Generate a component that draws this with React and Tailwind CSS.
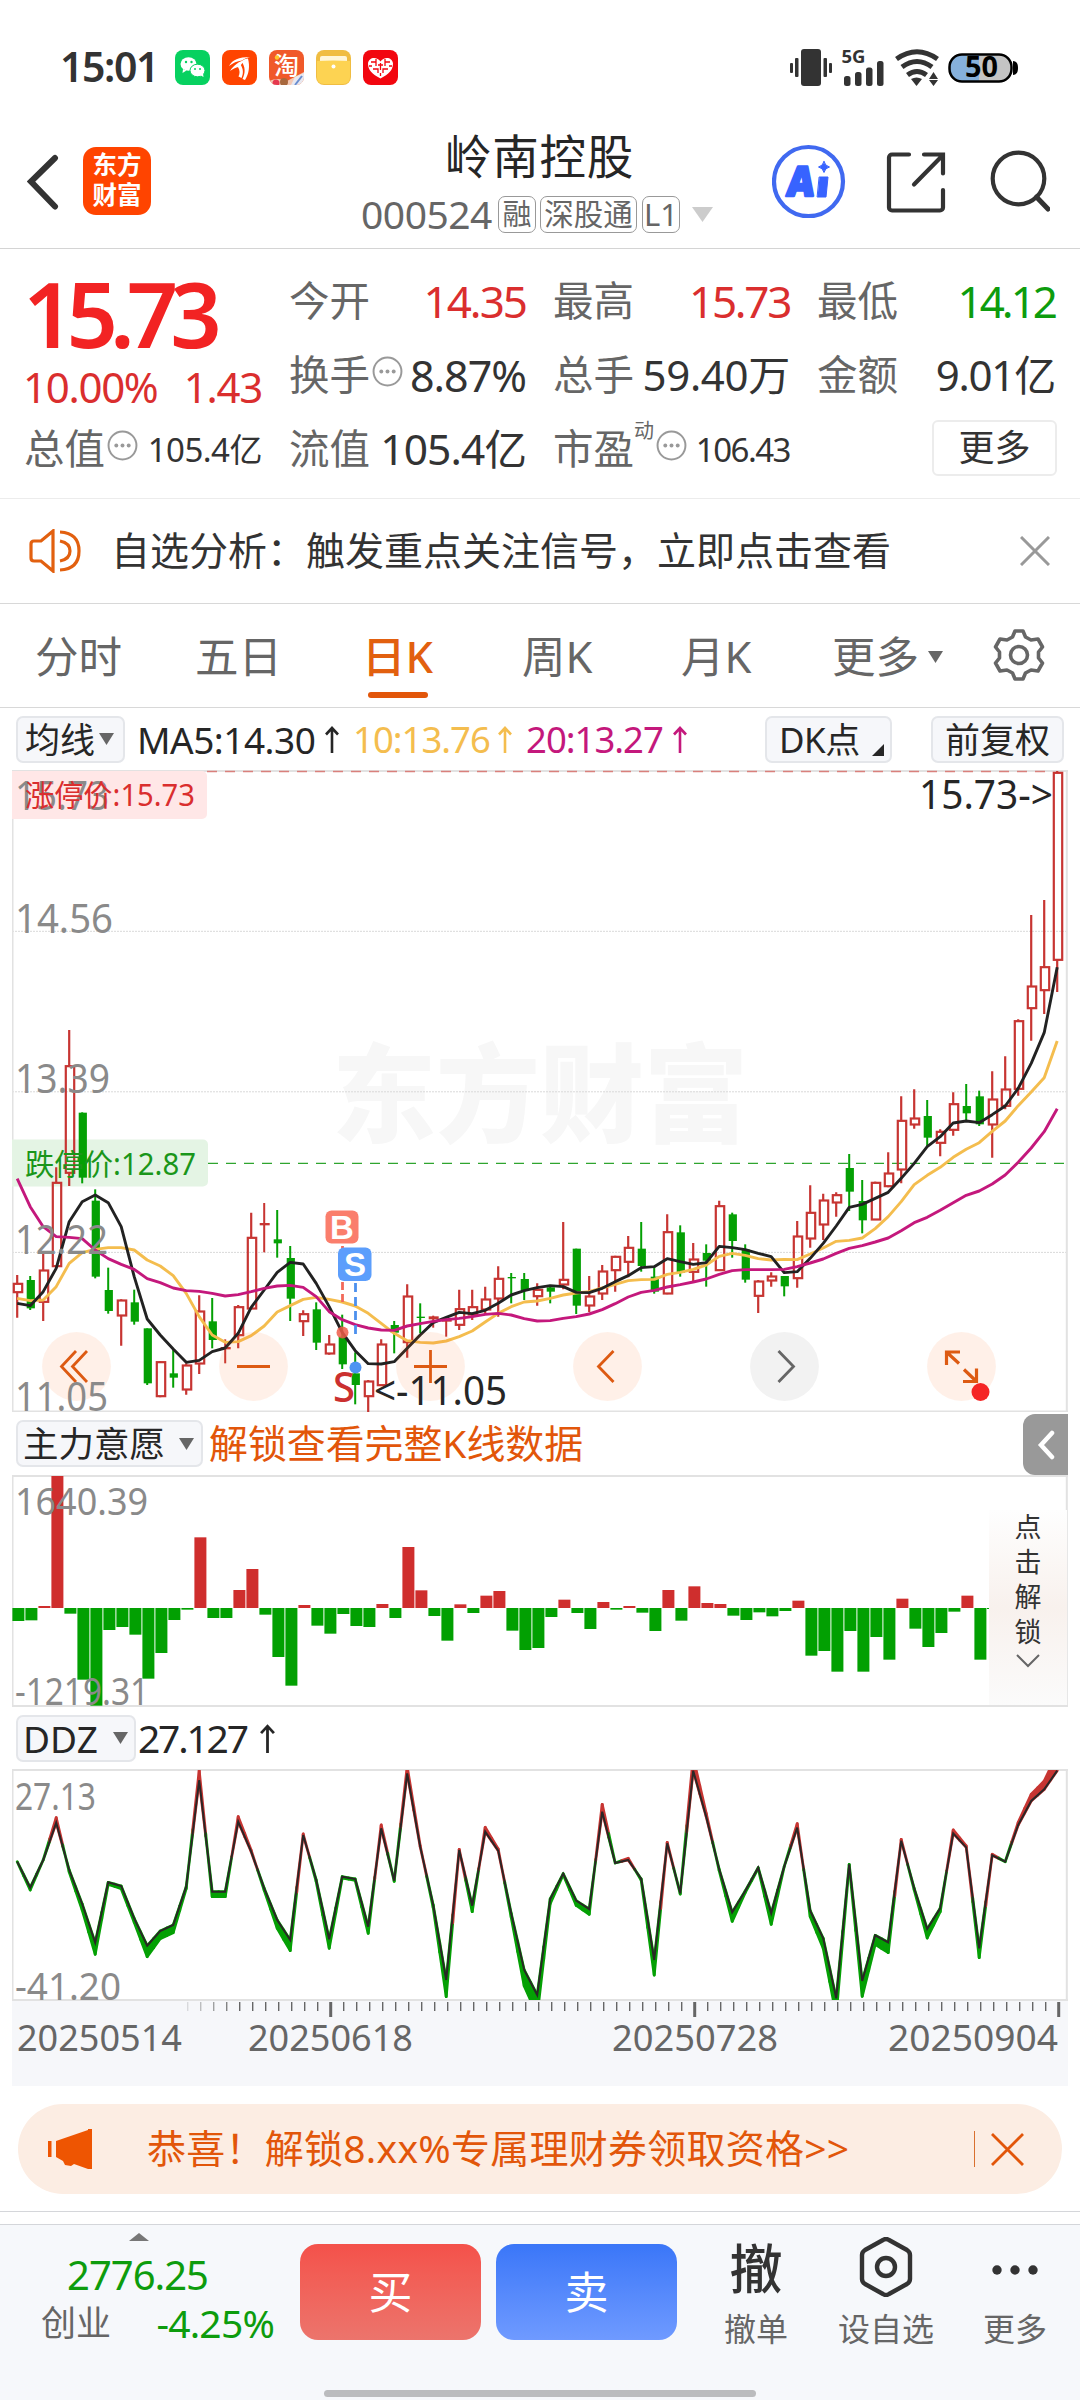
import React from 'react'

const RED = '#c73532'
const GREEN = '#04a004'
const STEP = 13
const FIRST_X = 17.2

const xAt = (i) => FIRST_X + STEP * i
const yAt = (v) => 1020 + v / 3

// [up, high, body top, body bottom, low]
const candles = [
  [1, 765, 790, 818, 893], [0, 768, 780, 865, 870], [1, 702, 750, 847, 903], [1, 442, 487, 740, 742],
  [1, 30, 137, 460, 498], [0, 277, 278, 473, 490], [0, 508, 542, 770, 775], [0, 743, 810, 873, 881],
  [1, 838, 840, 888, 977], [0, 809, 847, 905, 914], [0, 925, 925, 1090, 1095], [1, 1023, 1025, 1130, 1132],
  [0, 990, 1060, 1073, 1103], [1, 1030, 1035, 1110, 1124], [1, 826, 873, 1032, 1062], [0, 834, 904, 960, 985],
  [1, 958, 981, 988, 1030], [1, 855, 860, 947, 985], [1, 578, 652, 867, 868], [1, 549, 609, 616, 697],
  [0, 570, 658, 670, 713], [0, 678, 714, 836, 903], [1, 871, 881, 905, 948], [0, 847, 868, 968, 990],
  [1, 945, 972, 1002, 1004], [0, 884, 950, 1033, 1047], [0, 997, 1060, 1095, 1153], [1, 1080, 1083, 1130, 1178],
  [1, 958, 972, 1097, 1098], [0, 903, 915, 938, 1000], [1, 793, 828, 968, 1013], [0, 850, 890, 894, 940],
  [1, 887, 889, 898, 923], [1, 895, 897, 905, 950], [1, 809, 866, 916, 930], [1, 809, 860, 885, 900],
  [1, 800, 837, 870, 882], [1, 739, 775, 837, 890], [0, 759, 771, 775, 850], [0, 759, 777, 810, 840],
  [1, 790, 808, 830, 857], [0, 795, 802, 815, 850], [1, 606, 778, 795, 808], [0, 686, 686, 857, 882],
  [1, 768, 828, 858, 877], [1, 735, 753, 822, 840], [1, 707, 709, 752, 815], [1, 648, 682, 727, 772],
  [0, 606, 686, 738, 755], [0, 742, 770, 815, 821], [1, 583, 635, 822, 823], [0, 616, 637, 758, 770],
  [1, 669, 717, 757, 783], [0, 673, 699, 722, 800], [1, 542, 557, 752, 753], [0, 578, 583, 663, 713],
  [0, 673, 689, 779, 788], [1, 780, 783, 829, 879], [1, 757, 768, 783, 800], [0, 768, 768, 799, 829],
  [1, 603, 648, 776, 803], [1, 496, 577, 657, 683], [1, 521, 540, 615, 660], [1, 517, 524, 549, 590],
  [0, 402, 444, 515, 573], [0, 480, 543, 601, 640], [1, 485, 487, 600, 600], [1, 397, 459, 500, 502],
  [1, 229, 301, 450, 490], [1, 208, 294, 315, 326], [0, 240, 288, 353, 380], [1, 328, 334, 370, 409],
  [1, 217, 251, 331, 347], [0, 192, 258, 280, 302], [0, 212, 229, 313, 318], [1, 154, 237, 315, 413],
  [1, 109, 207, 259, 268], [1, -2, 2, 208, 227], [1, -315, -102, -34, 62], [1, -360, -160, -88, -18],
  [1, -747, -743, -179, -84],
]

const ma5 = [850, 857, 815, 745, 605, 545, 525, 548, 620, 770, 897, 945, 987, 1027, 1021, 995, 984, 940, 862, 810, 757, 727, 732, 790, 860, 937, 992, 1031, 1032, 1025, 985, 945, 908, 892, 877, 881, 871, 850, 825, 812, 803, 797, 800, 817, 818, 805, 785, 767, 743, 740, 716, 725, 733, 728, 679, 683, 689, 700, 710, 758, 755, 715, 670, 618, 562, 553, 535, 517, 475, 430, 380, 350, 309, 303, 308, 284, 258, 205, 130, 38, -158]
const ma10 = [835, 842, 840, 800, 730, 698, 688, 683, 683, 690, 720, 738, 767, 820, 890, 945, 967, 965, 947, 918, 876, 857, 838, 832, 838, 846, 858, 880, 910, 940, 962, 967, 969, 963, 950, 933, 906, 880, 860, 846, 843, 835, 825, 819, 815, 804, 793, 782, 779, 778, 763, 757, 748, 735, 709, 700, 706, 716, 720, 718, 719, 702, 684, 664, 661, 654, 626, 590, 545, 494, 466, 442, 412, 388, 368, 334, 303, 257, 216, 173, 63]
const ma20 = [476, 560, 620, 650, 652, 656, 690, 716, 733, 748, 776, 788, 804, 812, 814, 820, 828, 824, 815, 805, 798, 796, 802, 830, 875, 899, 914, 924, 930, 931, 918, 911, 904, 899, 895, 890, 883, 880, 885, 896, 903, 902, 895, 890, 882, 869, 851, 831, 817, 811, 801, 794, 786, 777, 763, 752, 749, 749, 749, 748, 740, 729, 717, 700, 685, 677, 666, 654, 632, 608, 592, 571, 548, 526, 513, 492, 465, 427, 384, 335, 266]

const flow = [-39, -37, 6, 396, -17, -215, -293, -66, -57, -80, -212, -135, -36, -5, 212, -30, -30, 54, 117, -20, -147, -233, 9, -53, -77, -18, -54, -57, 12, -30, 183, 53, -24, -98, 11, -15, 37, 51, -68, -126, -120, -27, 25, -15, -63, 18, -5, 6, -14, -69, 54, -38, 65, 15, 12, -23, -36, -13, -25, -9, 22, -143, -129, -191, -69, -191, -87, -155, 28, -62, -117, -75, -11, 37, -155]

// DDZ line and the distance to its signal line
const ddz = [485, 563, 480, 368, 510, 612, 728, 547, 558, 655, 737, 693, 675, 560, 240, 575, 575, 365, 455, 565, 660, 720, 405, 540, 718, 530, 537, 680, 385, 542, 220, 440, 615, 840, 450, 617, 395, 452, 640, 810, 885, 597, 521, 602, 627, 335, 489, 480, 537, 780, 430, 580, 212, 350, 508, 637, 573, 503, 640, 500, 383, 632, 715, 895, 493, 843, 706, 727, 422, 565, 687, 625, 400, 442, 745, 466, 485, 375, 303, 268, 212]
const ddzGap = [0, 7, 0, -15, 6, 18, 35, 6, 8, 12, 33, 23, 23, 6, -28, 15, 15, -15, -4, 6, 25, 32, -3, 5, 27, 4, 4, 20, -10, 2, -20, -3, 8, 50, -2, 18, -13, -5, 12, 48, 60, 14, 3, 14, 16, -22, 0, -5, 4, 45, -3, 2, -40, -10, 4, 27, 5, 2, 33, 0, -12, 18, 30, 50, 2, 46, 27, 31, -4, 5, 27, 10, -10, -4, 28, -3, 0, -8, -20, -25, -50]

const line = (arr) => arr.map((v, i) => `${xAt(i)},${yAt(v)}`).join(' ')

function Label({ x, y, w, size = 40, fill = '#8a8a8a', weight = 400, children }) {
  return (
    <text x={x} y={y} fontSize={size} fill={fill} fontWeight={weight} textLength={w} lengthAdjust="spacingAndGlyphs">
      {children}
    </text>
  )
}

function Triangle({ className }) {
  return (
    <svg viewBox="0 0 15 12" preserveAspectRatio="none" className={className}>
      <path d="M0 0h15L7.500 12z" fill="currentColor" />
    </svg>
  )
}

function ArrowUp({ className }) {
  return (
    <svg viewBox="0 0 14 27" className={className} fill="none" stroke="currentColor" strokeWidth="2.6">
      <path d="M7 27V2M1 8.500l6-6.500 6 6.500" />
    </svg>
  )
}

function InfoDots() {
  return (
    <svg viewBox="0 0 30 30" className="w-[31px] h-[31px] shrink-0 -mt-[7px]">
      <circle cx="15" cy="15" r="13.500" fill="none" stroke="#999" strokeWidth="1.900" />
      <circle cx="9" cy="15" r="1.900" fill="#999" />
      <circle cx="15" cy="15" r="1.900" fill="#999" />
      <circle cx="21" cy="15" r="1.900" fill="#999" />
    </svg>
  )
}

function StatusBar() {
  return (
    <div className="h-[120px] pt-[14px] pl-[60px] pr-[61px] flex items-center justify-between">
      <div className="flex items-center">
        <span className="w-[115px] -mt-[2px] text-[41px] leading-[56px] font-semibold text-[#333] tracking-[-1.4px]">15:01</span>
        <div className="flex gap-[12px]">
          <svg viewBox="0 0 35 35" className="w-[35px] h-[35px]">
            <rect width="35" height="35" rx="8" fill="#07d160" />
            <ellipse cx="13.500" cy="14" rx="8" ry="6.800" fill="#fff" />
            <path d="M8 19l-.5 4 4-2.500z" fill="#fff" />
            <ellipse cx="22.500" cy="20.500" rx="7.500" ry="6.300" fill="#fff" stroke="#07d160" strokeWidth="1" />
            <path d="M25 25l3.500 2-.5-3.500z" fill="#fff" />
            <circle cx="11" cy="12" r="1.200" fill="#07d160" />
            <circle cx="16.500" cy="12" r="1.200" fill="#07d160" />
            <circle cx="20" cy="19" r="1" fill="#07d160" />
            <circle cx="25" cy="19" r="1" fill="#07d160" />
          </svg>
          <svg viewBox="0 0 35 35" className="w-[35px] h-[35px]">
            <rect width="35" height="35" rx="8" fill="#ff4400" />
            <path d="M7 16C10 10 17 7 28 7c-4 1-6 2-8 3.500-5 .5-9 2.500-13 5.500z" fill="#fff" />
            <path d="M8 21c4-6 9-10 16-11-3 2-5 4-6 7-4 0-7 2-10 4z" fill="#fff" />
            <path d="M19.500 11.500c2-2 4-3 6.500-3 2 8 1 15-3 21.500l-2.500-1c3-6 3-12-1-17.500z" fill="#fff" />
            <path d="M16 17l2.500-2.500c3 4.500 3 9 1 13.500l-3-1.500c1.500-3 1.500-6-.5-9.500z" fill="#fff" />
          </svg>
          <svg viewBox="0 0 35 35" className="w-[35px] h-[35px]">
            <defs>
              <clipPath id="tao"><rect width="35" height="35" rx="8" /></clipPath>
            </defs>
            <g clipPath="url(#tao)">
              <rect width="35" height="35" fill="#f0592a" />
              <path d="M0 31q9-4 18 0l17-9v13H0z" fill="#f4c9b4" />
              <circle cx="7" cy="33" r="3.500" fill="#e5384f" />
              <circle cx="15" cy="32" r="4" fill="#a8683d" />
              <path d="M22 35l4-8 9-4v12z" fill="#e8e8f0" />
              <path d="M26 35l7-9" stroke="#6a8ed0" strokeWidth="2" />
              <text x="5" y="24.500" fontSize="25" fontWeight="500" fill="#fff">淘</text>
              <circle cx="8" cy="7.500" r="2.200" fill="#ffc629" />
            </g>
          </svg>
          <svg viewBox="0 0 35 35" className="w-[35px] h-[35px]">
            <rect width="35" height="35" rx="8" fill="#f0bd42" />
            <rect x="4" y="6" width="27" height="9" rx="2" fill="#fff6d8" />
            <path d="M1 11q16-1 33 0v16q0 7-7 7H8q-7 0-7-7z" fill="#fdd352" />
            <circle cx="17.500" cy="16.500" r="2" fill="#fff" />
          </svg>
          <svg viewBox="0 0 35 35" className="w-[35px] h-[35px]">
            <rect width="35" height="35" rx="8" fill="#f2060f" />
            <path d="M17.500 28.500C9 24 5 20 5 13.500 5.500 7 14 6 17.500 11.500 21 6 29.500 7 30 13.500c0 6.500-4 10.500-12.500 15z" fill="#fff" />
            <path d="M8 12h5v4M10 19h5v4M27 12h-5v4M25 19h-5v4M15 15h5M17.500 13v7M6 16h3M29 16h-3M13 9v3M22 9v3M17.500 23v3" stroke="#f2060f" strokeWidth="1.300" fill="none" />
          </svg>
        </div>
      </div>

      <svg viewBox="0 0 229 38" className="w-[229px] h-[38px] overflow-visible" fill="#333">
        <rect x="0" y="15" width="3" height="10" rx="1" />
        <rect x="5" y="10" width="3.500" height="19" rx="1" />
        <rect x="11" y="1" width="20" height="37" rx="3" />
        <rect x="33.500" y="10" width="3.500" height="19" rx="1" />
        <rect x="39" y="15" width="3" height="10" rx="1" />
        <text x="51.500" y="15" fontSize="18.500" fontWeight="700" textLength="24" lengthAdjust="spacingAndGlyphs">5G</text>
        <rect x="54" y="28" width="6.500" height="10" rx="2.500" />
        <rect x="65" y="24" width="6.500" height="14" rx="2.500" />
        <rect x="76" y="19.500" width="6.500" height="18.500" rx="2.500" />
        <rect x="87" y="13" width="6.500" height="25" rx="2.500" />
        <g fill="none" stroke="#333" strokeWidth="5" transform="translate(105 0)">
          <path d="M1.500 11Q22-3.500 42.500 11" />
          <path d="M7 19Q22 8 37 19" />
          <path d="M12.500 27Q22 20 31.500 27" />
        </g>
        <path d="M121 31q5.500-3 11 0l-5.500 7z" />
        <path d="M143.500 24l4.500 7h-9zM143.500 38l4.500-6h-9z" />
        <rect x="159.500" y="6.500" width="62" height="27" rx="12.500" fill="#c4c4c4" />
        <path d="M189 6.500h-17a12.500 13.500 0 0 0 0 27h17z" fill="#86b1dc" />
        <rect x="159.500" y="6.500" width="62" height="27" rx="12.500" fill="none" stroke="#000" strokeWidth="2.500" />
        <path d="M223 13q5 0 5 7t-5 7z" fill="#000" />
        <text x="175" y="29" fontSize="28" fontWeight="700" fill="#000" textLength="33" lengthAdjust="spacingAndGlyphs">50</text>
      </svg>
    </div>
  )
}

function Header() {
  return (
    <div className="h-[129px] border-b border-[#d4d4d4] flex items-start pl-[27px] pr-[30px]">
      <div className="flex items-center pt-[27px] w-[290px]">
        <svg viewBox="0 0 33 60" className="w-[33px] h-[60px]" fill="none" stroke="#333" strokeWidth="6" strokeLinecap="round">
          <path d="M28 7L4 30.500l24 25" />
        </svg>
        <div className="ml-[23px] w-[68px] h-[68px] rounded-[13px] bg-[#ff4400] text-white font-bold text-[24.500px] leading-[30px] text-center pt-[3px]">
          东方
          <br />
          财富
        </div>
      </div>

      <div className="ml-[44px] w-[352px] flex flex-col items-center">
        <h1 className="mt-[10px] ml-[5px] text-[46.500px] leading-[52px] text-[#262626] tracking-[0.8px]">岭南控股</h1>
        <div className="mt-[14px] flex items-center h-[37px] text-[#666] whitespace-nowrap">
          <span className="text-[39px] leading-[53px] -mt-[2px] tracking-[-0.5px]">000524</span>
          <span className="ml-[6px] w-[38px] h-[37px] rounded-[7px] border border-[#999] text-[29px] leading-[34px] text-center">融</span>
          <span className="ml-[4px] w-[97px] h-[37px] rounded-[7px] border border-[#999] text-[29.500px] leading-[34px] text-center">深股通</span>
          <span className="ml-[5px] w-[38px] h-[37px] rounded-[7px] border border-[#999] text-[31px] leading-[34px] text-center">L1</span>
          <Triangle className="ml-[12px] w-[21px] h-[15px] text-[#ccc]" />
        </div>
      </div>

      <svg viewBox="0 0 278 76" className="ml-auto mt-[24px] w-[278px] h-[76px]" fill="none" stroke="#333" strokeWidth="4.200" strokeLinecap="round">
        <circle cx="36.500" cy="37.500" r="34.500" stroke="#4069f0" />
        <g fill="#3763ff" stroke="#3763ff" strokeWidth="1" strokeLinejoin="round">
          <text x="0" y="0" transform="translate(14 51.500) skewX(-6)" fontSize="41" fontWeight="900" textLength="27" lengthAdjust="spacingAndGlyphs" strokeWidth="2.500">A</text>
          <path d="M47.500 33h8.500l-2 20h-8.500z" />
          <path d="M52 17.500q1 4.500 5.500 5.500-4.500 1-5.500 5.500-1-4.500-5.500-5.500 4.500-1 5.500-5.500z" />
        </g>
        <path d="M137 10.500h-17a3 3 0 0 0-3 3v50a3 3 0 0 0 3 3h48a3 3 0 0 0 3-3V46M152 10.500h19v19M170 12l-28 28.500" />
        <circle cx="246.500" cy="34.500" r="25.800" />
        <path d="M264.500 53l11.500 12" strokeWidth="5" />
      </svg>
    </div>
  )
}

function Cell({ label, info, sup, value, className }) {
  return (
    <div className="h-[74px] flex items-center justify-between whitespace-nowrap">
      <span className="flex items-center text-[40.500px] leading-none text-[#666]">
        {label}
        {sup && <span className="text-[20px] -mt-[36px]">{sup}</span>}
        {info && <span className="ml-[2px]"><InfoDots /></span>}
      </span>
      <span className={className}>{value}</span>
    </div>
  )
}

function Quote() {
  return (
    <div className="h-[250px] pt-[15px] pl-[26px] border-b border-[#ececec] grid grid-cols-[236px_237px_237px_238px] gap-x-[27px] content-start">
      <div className="row-span-2 text-[#da2e2e] -ml-[3px]">
        <div className="h-[98px] flex items-center text-[90px] leading-[98px] font-semibold text-[#f22323] tracking-[-8px]">15.73</div>
        <div className="h-[50px] flex items-center justify-between text-[42px] leading-[50px] tracking-[-1.300px]">
          <span>10.00%</span>
          <span>1.43</span>
        </div>
      </div>
      <Cell label="今开" value="14.35" className="text-[44px] leading-none tracking-[-2px] text-[#da2e2e]" />
      <Cell label="最高" value="15.73" className="text-[44px] leading-none tracking-[-2.300px] text-[#da2e2e]" />
      <Cell label="最低" value="14.12" className="text-[44px] leading-none tracking-[-3px] text-[#0d9c0d]" />
      <Cell label="换手" info value="8.87%" className="text-[43px] leading-none tracking-[-1px] text-[#333]" />
      <Cell label="总手" value="59.40万" className="text-[42px] leading-none tracking-[-0.300px] text-[#333]" />
      <Cell label="金额" value="9.01亿" className="text-[42px] leading-none tracking-[-1.200px] text-[#333]" />
      <div className="-ml-[2px]">
        <Cell label="总值" info value="105.4亿" className="text-[33px] leading-none tracking-[-0.500px] text-[#333]" />
      </div>
      <Cell label="流值" value="105.4亿" className="text-[42.500px] leading-none tracking-[-0.900px] text-[#333]" />
      <Cell label="市盈" sup="动" info value="106.43" className="text-[33px] leading-none tracking-[-1.500px] text-[#333]" />
      <div className="flex items-center justify-end">
        <button className="w-[125px] h-[56px] -mt-[2px] -mr-[2px] rounded-[6px] border-2 border-[#ececec] text-[36px] leading-none text-[#333]">更多</button>
      </div>
    </div>
  )
}

function Notice() {
  return (
    <div className="h-[105px] border-b border-[#d8d8d8] flex items-center pl-[29px] pr-[30px]">
      <svg viewBox="0 0 52 44" className="w-[52px] h-[44px]" fill="none" stroke="#e2600f" strokeWidth="3.200">
        <path d="M24 2v40L12 32H5q-3 0-3-3V15q0-3 3-3h7zM31 3q19 1 19 19T31 41M31 12q10 2 10 10t-10 10" />
      </svg>
      <p className="ml-[30px] -mt-[3px] text-[39px] leading-[54px] text-[#333]">自选分析：触发重点关注信号，立即点击查看</p>
      <svg viewBox="0 0 30 30" className="ml-auto w-[30px] h-[30px]" stroke="#999" strokeWidth="3">
        <path d="M1 1l28 28M29 1L1 29" />
      </svg>
    </div>
  )
}

function Tabs() {
  return (
    <div className="h-[104px] pt-[2px] border-b border-[#d8d8d8] flex items-center pl-[35px] text-[43.500px] leading-none text-[#666] whitespace-nowrap">
      <span className="w-[160px]">分时</span>
      <span className="w-[167px]">五日</span>
      <span className="w-[160px] relative text-[#e2600f] font-medium">
        日K
        <i className="absolute left-[6px] -bottom-[20px] w-[60px] h-[6px] rounded-full bg-[#e2560a]" />
      </span>
      <span className="w-[159px]">周K</span>
      <span className="w-[151px]">月K</span>
      <span className="flex items-center">
        更多
        <Triangle className="ml-[9px] w-[15px] h-[12px]" />
      </span>
      <svg viewBox="0 0 52 52" className="ml-[50px] -mt-[4px] w-[52px] h-[52px]" fill="none" stroke="#666" strokeWidth="3.600" strokeLinejoin="round">
        <path d="M22 2h8l2.500 6 5.500 3 7-1 4.500 8-4 5v6l4 5-4.500 8-7-1-5.500 3-2.500 6h-8l-2.500-6-5.500-3-7 1-4.500-8 4-5v-6l-4-5L7 10l7 1 5.500-3z" />
        <circle cx="26" cy="26" r="8.500" />
      </svg>
    </div>
  )
}

const chip = 'h-[47px] shrink-0 rounded-[7px] border-2 border-[#e4e6ea] bg-[#f6f7fa] flex items-center leading-none text-[#262626]'

function CandleChart() {
  return (
    <svg viewBox="12 770 1056 642" className="w-[1056px] h-[642px] block">
      <g fontFamily="'Noto Sans CJK SC'" fontWeight="900" fontSize="107" fill="#f7f7f7">
        <text x="332" y="1134" textLength="416" lengthAdjust="spacingAndGlyphs">东方财富</text>
      </g>
      {[931.3, 1091.8, 1252.4].map((y) => (
        <line key={y} x1="12" x2="1068" y1={y} y2={y} stroke="#d9d9d9" strokeWidth="1" strokeDasharray="2 1" />
      ))}
      <path d="M12.500 1412V771M12 771h1056M1066.800 771v640M12 1411.500h1056" stroke="#e2e2e2" strokeWidth="2" fill="none" />
      <path d="M207 771.500h846" stroke="#d9807c" strokeWidth="1.300" strokeDasharray="10 8" />
      <path d="M208 1163.400h858" stroke="#2fa52f" strokeWidth="1.400" strokeDasharray="10 8" />
      <path d="M12 771h190a5 5 0 0 1 5 5v38a5 5 0 0 1-5 5H12z" fill="#ffe7e7" />
      <path d="M12 1139.500h191a5 5 0 0 1 5 5v37a5 5 0 0 1-5 5H12z" fill="#e4f4e4" />

      {candles.map(([up, high, top, bottom, low], i) => {
        const x = xAt(i)
        const h = (bottom - top) / 3
        const color = up ? RED : GREEN
        if (!up || h < 4) {
          return (
            <g key={i} fill={color}>
              <rect x={x - 1} y={yAt(high)} width="2" height={(low - high) / 3} />
              <rect x={x - 3.5 - (up ? 1 : 0)} y={yAt(top)} width={up ? 10 : 8.2} height={h} />
            </g>
          )
        }
        return (
          <g key={i} fill="none" stroke={color} strokeWidth="2.200">
            <path d={`M${x} ${yAt(high)}V${yAt(top)}M${x} ${yAt(bottom)}V${yAt(low)}`} />
            <rect x={x - 3.4} y={yAt(top) + 0.5} width="8.400" height={h - 1} />
          </g>
        )
      })}

      <g fill="none" strokeWidth="2.900" strokeLinejoin="round">
        <polyline points={line(ma10)} stroke="#f4bd4e" />
        <polyline points={line(ma5)} stroke="#222" />
        <polyline points={line(ma20)} stroke="#c4187c" />
      </g>

      <path d="M342.500 1246v57" stroke="#f26a5a" strokeWidth="2.800" strokeDasharray="8 4" />
      <path d="M355.500 1283v56" stroke="#4c90ee" strokeWidth="2.800" strokeDasharray="9 5" />
      <circle cx="342.500" cy="1332.500" r="6" fill="#ee5a48" fillOpacity=".85" />
      <circle cx="355.500" cy="1367.500" r="6" fill="#4d94f2" />
      <rect x="325.500" y="1210.500" width="33" height="33" rx="6" fill="#fa7e6c" />
      <rect x="338" y="1247.500" width="33.500" height="33.500" rx="6" fill="#5c9efc" />
      <g fontFamily="'Liberation Sans'" fontWeight="700" fill="#fff" textAnchor="middle">
        <text x="342" y="1238.500" fontSize="33">B</text>
        <text x="355" y="1276" fontSize="33">S</text>
      </g>
      <text x="333" y="1401.500" fontSize="41" fontWeight="500" fill="#cb302f" textLength="22" lengthAdjust="spacingAndGlyphs">S</text>

      {[76.5, 253.5, 430.5, 607.5, 784.5, 961.5].map((cx) => (
        <circle key={cx} cx={cx} cy="1366.500" r="34.400" fill={cx === 784.5 ? '#f2f2f2' : '#ff7430'} fillOpacity={cx === 784.5 ? 1 : 0.11} />
      ))}
      <g fill="none" stroke="#dd5a12" strokeWidth="2.800">
        <path d="M76 1351l-14.500 15.500L76 1382M87 1351l-14.500 15.500L87 1382" />
        <path d="M237 1366.500h33M414 1366.500h33M430.500 1350v33" />
        <path d="M613.500 1351l-15 15.500 15 15.500" />
        <path d="M778.500 1351l15 15.500-15 15.500" stroke="#666" />
        <path d="M946.500 1365v-13h13.500M947 1352.500l12 11M963 1381.500h13.500v-13M976 1381l-12-11.500" strokeWidth="3.200" />
      </g>
      <circle cx="980.500" cy="1392" r="9" fill="#f52525" />

      <Label x={15} y={810} w={94}>15.73</Label>
      <Label x={15} y={933} w={98}>14.56</Label>
      <Label x={15} y={1093} w={95}>13.39</Label>
      <Label x={15} y={1254} w={93}>12.22</Label>
      <Label x={15} y={1410.5} w={93}>11.05</Label>
      <Label x={25} y={806} w={170} size={30} fill="#da2e2e">涨停价:15.73</Label>
      <Label x={25} y={1175} w={171} size={30} fill="#1a961a">跌停价:12.87</Label>
      <Label x={919} y={809} w={134} fill="#262626">15.73-&gt;</Label>
      <Label x={374} y={1405} w={133} fill="#262626">&lt;-11.05</Label>
    </svg>
  )
}

function FlowChart() {
  return (
    <div className="relative">
      <svg viewBox="12 1475 1056 232" className="w-[1056px] h-[232px] block">
        <path d="M12.500 1706V1476M12 1476h1056M1066.800 1476v230M12 1706h1056" stroke="#e2e2e2" strokeWidth="2" fill="none" />
        {flow.map((v, i) => (
          <rect
            key={i}
            x={12.4 + STEP * i}
            y={v > 0 ? 1608 - v / 3 : 1608}
            width="12"
            height={Math.abs(v) / 3}
            fill={v > 0 ? '#cf2e2d' : '#02a002'}
          />
        ))}
        <rect x="987" y="1608" width="2" height="1" fill={GREEN} />
        <Label x={15} y={1515} w={133} size={37.500}>1640.39</Label>
        <Label x={15} y={1705} w={134} size={37.500}>-1219.31</Label>
      </svg>
      <div className="absolute left-[977px] top-[35px] w-[78px] h-[195px] bg-linear-to-b from-[#fefefe] via-[#f8f1ed] to-[#fbfbfb] flex flex-col items-center text-[27px] leading-[35px] text-[#333]">
        <span className="-mt-[1px]">点</span>
        <span>击</span>
        <span>解</span>
        <span>锁</span>
        <svg viewBox="0 0 24 14" className="mt-[5px] w-[24px] h-[14px]" fill="none" stroke="#666" strokeWidth="2">
          <path d="M1 1l11 11L23 1" />
        </svg>
      </div>
    </div>
  )
}

function DdzChart() {
  const y = (v) => 1700 + v / 3
  return (
    <svg viewBox="12 1769 1056 232" className="w-[1056px] h-[232px] block">
      <defs>
        <clipPath id="ddz"><rect x="12" y="1770" width="1056" height="230" /></clipPath>
      </defs>
      <path d="M12.500 2000V1770M12 1770h1056M1066.800 1770v230M12 2000h1056" stroke="#e2e2e2" strokeWidth="2" fill="none" />
      <Label x={15} y={1810} w={81} size={37.500}>27.13</Label>
      <Label x={15} y={1999.5} w={106} size={37.500}>-41.20</Label>
      <g clipPath="url(#ddz)">
        {ddz.slice(1).map((v, i) => {
          const a = ddz[i]
          const ga = ddzGap[i]
          const gb = ddzGap[i + 1]
          const half = (p, q) => (p + q) / 2
          const part = (i0, v0, g0, v1, g1, i1) =>
            `${xAt(i0)},${y(v0)} ${xAt(i1)},${y(v1)} ${xAt(i1)},${y(v1 + g1)} ${xAt(i0)},${y(v0 + g0)}`
          return (
            <g key={i} strokeWidth="2.800" strokeLinejoin="round">
              <polygon points={part(i, a, ga, half(a, v), half(ga, gb), i + 0.5)} fill={ga < 0 ? RED : GREEN} stroke={ga < 0 ? RED : GREEN} />
              <polygon points={part(i + 0.5, half(a, v), half(ga, gb), v, gb, i + 1)} fill={gb < 0 ? RED : GREEN} stroke={gb < 0 ? RED : GREEN} />
            </g>
          )
        })}
        <polyline points={ddz.map((v, i) => `${xAt(i)},${y(v)}`).join(' ')} fill="none" stroke="#2a2626" strokeWidth="2" />
      </g>
    </svg>
  )
}

function DateAxis() {
  const ticks = Array.from({ length: 68 }, (_, k) => k + 13)
  return (
    <svg viewBox="12 2001 1056 85" className="w-[1056px] h-[85px] block bg-[#f6f7fa]">
      {ticks.map((i) => {
        const big = i === 24 || i === 52 || i === 80
        return (
          <rect
            key={i}
            x={xAt(i) + (big ? 0 : 0.8)}
            y="2002"
            width={big ? 3 : 1.4}
            height={big ? 15 : 9}
            fill="#666"
            fillOpacity={Math.min(1, (i - 12) / 5)}
          />
        )
      })}
      <Label x={17} y={2051} w={165} size={37} fill="#666">20250514</Label>
      <Label x={248} y={2051} w={165} size={37} fill="#666">20250618</Label>
      <Label x={612} y={2051} w={166} size={37} fill="#666">20250728</Label>
      <Label x={888} y={2051} w={170} size={37} fill="#666">20250904</Label>
    </svg>
  )
}

function Banner() {
  return (
    <div className="mt-[18px] mx-[18px] h-[90px] rounded-full bg-[#fcede3] flex items-center pl-[29px] pr-[38px] text-[#e2560a]">
      <svg viewBox="0 0 46 40" className="w-[46px] h-[40px]" fill="#ee5502">
        <path d="M1 12h3.500v16H1zM9 12l32-11V0h4v40h-4l-14-5-3 2-6-1-2-4-7-4z" />
      </svg>
      <p className="ml-[54px] -mt-[2px] text-[39px] leading-[54px] tracking-[0.250px] whitespace-nowrap">恭喜！解锁8.xx%专属理财券领取资格&gt;&gt;</p>
      <div className="ml-auto flex items-center">
        <i className="w-px h-[36px] bg-[#d9702f]" />
        <svg viewBox="0 0 33 33" className="ml-[16px] w-[33px] h-[33px]" stroke="#e2560a" strokeWidth="2.800">
          <path d="M1 1l31 31M32 1L1 32" />
        </svg>
      </div>
    </div>
  )
}

function BottomBar() {
  return (
    <div className="mt-[12px] h-[176px] border-t border-[#d4d6da] bg-[#f6f8fb] flex flex-col">
      <div className="h-[150px] flex items-start">
        <div className="w-[277px] pt-[8px] flex flex-col items-center text-[#0d9c0d]">
          <Triangle className="w-[20px] h-[8px] rotate-180 text-[#777]" />
          <span className="mt-[11px] h-[46px] -ml-[2px] text-[40px] leading-[46px] tracking-[-1px]">2776.25</span>
          <div className="mt-[3px] w-full pl-[41px] pr-[3px] h-[44px] flex items-center justify-between leading-[44px]">
            <span className="text-[35px] text-[#666]">创业</span>
            <span className="text-[39px] tracking-[-0.800px]">-4.25%</span>
          </div>
        </div>
        <button className="ml-[23px] mt-[19px] w-[181px] h-[96px] rounded-[18px] bg-linear-to-b from-[#f4514a] to-[#ec746c] text-white text-[44px] leading-none">买</button>
        <button className="ml-[15px] mt-[19px] w-[181px] h-[96px] rounded-[18px] bg-linear-to-b from-[#3a76f8] to-[#6f9aff] text-white text-[44px] leading-none">卖</button>
        <div className="ml-[44px] w-[70px] flex flex-col items-center">
          <span className="mt-[14px] text-[53px] leading-[60px] font-medium text-[#333]">撤</span>
          <span className="mt-[10px] text-[32px] leading-[40px] text-[#666]">撤单</span>
        </div>
        <div className="ml-[45px] w-[100px] flex flex-col items-center">
          <svg viewBox="0 0 54 60" className="mt-[12px] w-[54px] h-[60px]" fill="none" stroke="#333" strokeWidth="4.400" strokeLinejoin="round">
            <path d="M24 3q3-2 6 0l18 10q3 2 3 5v24q0 3-3 5L30 57q-3 2-6 0L6 47q-3-2-3-5V18q0-3 3-5z" />
            <circle cx="27" cy="30" r="9" />
          </svg>
          <span className="mt-[12px] text-[32px] leading-[40px] text-[#666]">设自选</span>
        </div>
        <div className="ml-[46px] w-[66px] flex flex-col items-center">
          <svg viewBox="0 0 46 10" className="mt-[40px] w-[46px] h-[10px]" fill="#333">
            <circle cx="5" cy="5" r="4.700" />
            <circle cx="23" cy="5" r="4.700" />
            <circle cx="41" cy="5" r="4.700" />
          </svg>
          <span className="mt-[34px] text-[32px] leading-[40px] text-[#666]">更多</span>
        </div>
      </div>
      <div className="mx-auto mt-[15px] w-[432px] h-[7px] rounded-full bg-[#bbbcbe]" />
    </div>
  )
}

export default function App() {
  return (
    <div className="w-[1080px] h-[2400px] overflow-hidden bg-white font-['Noto_Sans','Noto_Sans_CJK_SC',sans-serif]">
      <StatusBar />
      <Header />
      <Quote />
      <Notice />
      <Tabs />

      {/* Moving averages */}
      <div className="h-[62px] flex items-center pl-[16px] pr-[16px] text-[36.500px] leading-none whitespace-nowrap tracking-[-1px]">
        <span className={`${chip} w-[109px] pl-[7px] tracking-normal text-[35px]`}>
          均线
          <Triangle className="ml-[4px] w-[15px] h-[12px] text-[#666]" />
        </span>
        <span className="ml-[12px] w-[176px] text-[37px] tracking-[-0.5px] text-[#262626]">MA5:14.30</span>
        <ArrowUp className="ml-[12px] w-[14px] h-[27px] text-[#262626]" />
        <span className="ml-[14px] w-[134px] text-[#f4bd4e]">10:13.76</span>
        <ArrowUp className="ml-[11px] w-[14px] h-[27px] text-[#f4bd4e]" />
        <span className="ml-[14px] w-[138px] text-[#c4187c]">20:13.27</span>
        <ArrowUp className="ml-[9px] w-[14px] h-[27px] text-[#c4187c]" />
        <span className={`${chip} ml-auto w-[127px] pl-[12px] tracking-[-0.5px] text-[35px]`}>
          DK点
          <svg viewBox="0 0 12 12" className="ml-[12px] mt-[22px] w-[12px] h-[12px]">
            <path d="M12 0v12H0z" fill="#262626" />
          </svg>
        </span>
        <span className={`${chip} ml-[39px] w-[133px] justify-center tracking-normal text-[35px]`}>前复权</span>
      </div>

      <div className="pl-[12px]">
        <CandleChart />

        <div className="h-[63px] flex items-center pl-[4px] pr-[12px] leading-none whitespace-nowrap">
          <span className={`${chip} w-[187px] pl-[5px] text-[35.500px]`}>
            主力意愿
            <Triangle className="ml-[14px] w-[15px] h-[12px] text-[#666]" />
          </span>
          <span className="ml-[6px] text-[38.900px] text-[#e2560a]">解锁查看完整K线数据</span>
          <span className="ml-auto mt-[2px] w-[45px] h-[61px] rounded-l-[12px] bg-[#999] flex items-center justify-center">
            <svg viewBox="0 0 18 30" className="w-[18px] h-[30px]" fill="none" stroke="#fff" strokeWidth="4.500" strokeLinecap="round">
              <path d="M15 3L4 15l11 12" />
            </svg>
          </span>
        </div>
        <FlowChart />

        <div className="h-[62px] flex items-center pl-[4px] leading-none text-[#262626]">
          <span className={`${chip} w-[120px] pl-[5px] text-[37px]`}>
            DDZ
            <Triangle className="ml-auto mr-[6px] w-[15px] h-[12px] text-[#666]" />
          </span>
          <span className="ml-[2px] -mt-[2px] text-[39px] tracking-[-2.200px]">27.127</span>
          <ArrowUp className="ml-[13px] w-[15px] h-[29px]" />
        </div>
        <DdzChart />
        <DateAxis />
      </div>

      <Banner />
      <div className="mt-[17px] h-px bg-[#d4d6da]" />
      <BottomBar />
    </div>
  )
}
